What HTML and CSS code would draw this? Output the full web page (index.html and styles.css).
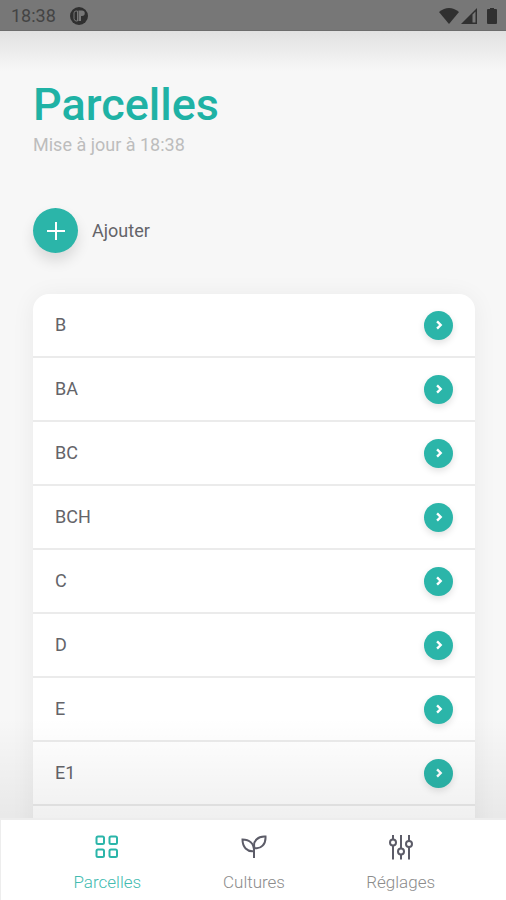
FILE: index.html
```html
<!DOCTYPE html>
<html lang="fr">
<head>
  <meta charset="utf-8">
  <meta name="viewport" content="width=device-width, initial-scale=1">
  <title>Parcelles</title>
  <link rel="stylesheet" href="styles.css">
</head>
<body>
  <svg class="sprite" aria-hidden="true">
    <symbol id="chevron" viewBox="0 0 10 10"><path d="M3.400 2 6.400 5 3.400 8"/></symbol>
  </svg>

  <header class="status">
    <div class="status-group">
      <span>18:38</span>
      <svg class="status-app" viewBox="0 0 18 18" aria-hidden="true">
        <circle cx="9" cy="9" r="9" fill="#303030"/>
        <path d="M7.500 4H6Q4 4 4 6v5.500Q4 13.500 6 14H7.500Z" fill="none" stroke="#777"/>
        <path d="M8.500 3.500H12a2.500 2.500 0 0 1 0 5.500h-1v5H8.500Z" fill="#777"/>
      </svg>
    </div>
    <div class="status-group status-icons">
      <svg class="wifi" viewBox="0 0 20 16" aria-hidden="true"><path d="M0 4Q10-4 20 4L10 16Z"/></svg>
      <svg class="signal" viewBox="0 0 16 16" aria-hidden="true"><path d="M0 16 16 0v16ZM11.500 6.500V14.500H14.500V3.500Z" fill-rule="evenodd"/></svg>
      <svg class="battery" viewBox="0 0 10 16" aria-hidden="true"><path d="M3 0h4v1h2q1 0 1 1v13q0 1-1 1H1q-1 0-1-1V2q0-1 1-1h2Z"/></svg>
    </div>
  </header>

  <main class="content">
    <h1>Parcelles</h1>
    <p class="updated">Mise à jour à 18:38</p>
    <button class="add" type="button">
      <span class="add-icon">
        <svg viewBox="0 0 18 18" aria-hidden="true"><path d="M9 0v18M0 9h18"/></svg>
      </span>
      Ajouter
    </button>
    <ul class="plots">
      <li><a href="#b">B<span class="go"><svg><use href="#chevron"/></svg></span></a></li>
      <li><a href="#ba">BA<span class="go"><svg><use href="#chevron"/></svg></span></a></li>
      <li><a href="#bc">BC<span class="go"><svg><use href="#chevron"/></svg></span></a></li>
      <li><a href="#bch">BCH<span class="go"><svg><use href="#chevron"/></svg></span></a></li>
      <li><a href="#c">C<span class="go"><svg><use href="#chevron"/></svg></span></a></li>
      <li><a href="#d">D<span class="go"><svg><use href="#chevron"/></svg></span></a></li>
      <li><a href="#e">E<span class="go"><svg><use href="#chevron"/></svg></span></a></li>
      <li><a href="#e1">E1<span class="go"><svg><use href="#chevron"/></svg></span></a></li>
      <li class="spacer"></li>
    </ul>
  </main>

  <nav class="tabs">
    <a class="tab active" href="#parcelles">
      <svg viewBox="0 0 26 26" aria-hidden="true">
        <rect x="2.500" y="2.500" width="7.500" height="7.500" rx="1.500"/><rect x="15.500" y="2.500" width="7.500" height="7.500" rx="1.500"/>
        <rect x="2.500" y="15.500" width="7.500" height="7.500" rx="1.500"/><rect x="15.500" y="15.500" width="7.500" height="7.500" rx="1.500"/>
      </svg>
      Parcelles
    </a>
    <a class="tab" href="#cultures">
      <svg viewBox="0 0 26 26" aria-hidden="true">
        <path d="M13 24V15"/>
        <path d="M13 17C6 18 1.500 13 1.500 5.500C8 5.500 13 9 13 17Z"/>
        <path d="M13.500 14C11.500 7 17 2 24.500 2.500C25 10 20 15.500 13.500 14Z"/>
      </svg>
      Cultures
    </a>
    <a class="tab" href="#reglages">
      <svg viewBox="0 0 26 26" aria-hidden="true">
        <path d="M5 1v4.500M5 11.500v14M13 1v13.500M13 20.500v5M21 1v6M21 13v12.500"/>
        <circle cx="5" cy="8.500" r="3"/><circle cx="13" cy="17.500" r="3"/><circle cx="21" cy="10" r="3"/>
      </svg>
      Réglages
    </a>
  </nav>
</body>
</html>
```
FILE: styles.css
```css
:root {
  --teal: #2bb5a9;
  --ink: #646469;
}

* { box-sizing: border-box; }

body {
  margin: 0;
  height: 100vh;
  display: flex;
  flex-direction: column;
  background: #f7f7f7;
  color: var(--ink);
  font: 18px/24px Roboto, sans-serif;
}

a { color: inherit; text-decoration: none; }
svg { display: block; }
.sprite { display: none; }

.status {
  display: flex;
  flex: none;
  align-items: center;
  justify-content: space-between;
  height: 31px;
  padding: 2px 9px 0 11px;
  border-bottom: 1px solid #6c6c6c;
  background: #777;
  color: #444;
}

.status-group { display: flex; align-items: center; gap: 14px; }
.status-icons { gap: 2px; fill: #303030; }
.status-app { width: 18px; height: 18px; }
.wifi { width: 20px; height: 16px; }
.signal { width: 16px; height: 16px; }
.battery { width: 10px; height: 16px; margin-left: 8px; }

.content {
  position: relative;
  flex: 1;
  min-height: 0;
  overflow: hidden;
  padding: 46px 31px 0 33px;
  background: linear-gradient(#e1e1e1, #f7f7f7 40px);
}

.content::after {
  content: "";
  position: absolute;
  inset: auto 0 0;
  height: 100px;
  background: linear-gradient(transparent, rgb(0 0 0 / 6%));
  pointer-events: none;
}

h1 {
  margin: 0;
  color: #1fb2a5;
  font-size: 45px;
  line-height: 56px;
  font-weight: 500;
}

.updated { margin: 0; color: #bdbdbd; }

.add {
  display: flex;
  align-items: center;
  gap: 14px;
  margin: 51px 0 41px;
  padding: 0;
  border: 0;
  background: none;
  color: inherit;
  font: inherit;
}

.add-icon,
.go {
  display: grid;
  place-items: center;
  border-radius: 50%;
  background: var(--teal);
  fill: none;
  stroke: #fff;
  stroke-width: 2;
}

.add-icon {
  width: 45px;
  height: 45px;
  box-shadow: 0 8px 14px rgb(0 0 0 / 12%);
}

.add-icon svg { width: 18px; height: 18px; }

.plots {
  margin: 0;
  padding: 0;
  border-radius: 16px 16px 0 0;
  background: #fff;
  box-shadow: 0 2px 24px rgb(0 0 0 / 6%);
  list-style: none;
}

.plots a {
  display: flex;
  align-items: center;
  justify-content: space-between;
  height: 64px;
  padding: 0 22px;
  border-bottom: 2px solid #ebebeb;
}

.spacer { height: 64px; }

.go {
  width: 29px;
  height: 29px;
  box-shadow: 0 3px 7px rgb(0 0 0 / 12%);
}

.go svg { width: 12px; height: 12px; }

.tabs {
  display: grid;
  grid-template-columns: repeat(3, 1fr);
  flex: none;
  height: 82px;
  padding: 0 32px 0 33px;
  border: solid #ededed;
  border-width: 2px 0 0 1px;
  background: #fff;
}

.tab {
  display: flex;
  flex-direction: column;
  align-items: center;
  gap: 10px;
  padding-top: 14px;
  color: #8c8c8c;
  font-size: 17px;
  font-weight: 300;
}

.tab svg {
  width: 26px;
  height: 26px;
  fill: none;
  stroke: #5c5c68;
  stroke-width: 2;
}

.tab.active { color: #42bbb0; }
.tab.active svg { stroke: var(--teal); }
```
